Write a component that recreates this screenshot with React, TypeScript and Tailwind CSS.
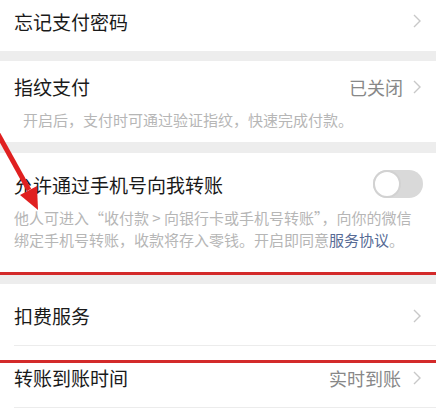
import React from "react";

const font = {
  fontFamily: '"Noto Sans CJK SC", "Noto Sans", sans-serif',
};

function Chevron() {
  return (
    <svg width="8" height="14" viewBox="0 0 8 14" className="shrink-0">
      <path d="M1 1 L7 7 L1 13" fill="none" stroke="#c8c8c8" strokeWidth="1.4" />
    </svg>
  );
}

function Toggle() {
  return (
    <div className="relative w-[50px] h-[28px] rounded-full bg-[#d9d9d9]">
      <div className="absolute left-0 top-0 w-[28px] h-[28px] rounded-full bg-white border-2 border-[#d2d2d2]" />
    </div>
  );
}

function Gap() {
  return <div className="h-[11px] bg-[#ededed]" />;
}

export default function App() {
  return (
    <div className="relative w-[436px] h-[418px] overflow-hidden bg-white" style={font}>
      {/* 忘记支付密码 */}
      <div className="flex items-start justify-between h-[51px] pl-[14px] pr-[15px] pt-[9px]">
        <span className="text-[19px] leading-[26px] text-[#1a1a1a]">忘记支付密码</span>
        <div className="pt-[5px]">
          <Chevron />
        </div>
      </div>
      <div className="h-[10px] bg-[#ededed]" />

      {/* 指纹支付 */}
      <div className="h-[81px] pt-[13px]">
        <div className="flex items-center justify-between pl-[14px] pr-[15px]">
          <span className="text-[19px] leading-[26px] text-[#1a1a1a]">指纹支付</span>
          <div className="flex items-center gap-[10px]">
            <span className="text-[18px] leading-[26px] text-[#888888]">已关闭</span>
            <Chevron />
          </div>
        </div>
        <p className="mt-[9px] pl-[23px] text-[15px] leading-[22px] text-[#b6b6b6]">
          开启后，支付时可通过验证指纹，快速完成付款。
        </p>
      </div>
      <Gap />

      {/* 允许通过手机号向我转账 */}
      <div className="h-[120px] pt-[19px] pl-[14px] pr-[13px]">
        <div className="flex items-center justify-between">
          <span className="text-[19px] leading-[26px] text-[#1a1a1a]">允许通过手机号向我转账</span>
          <div className="-mt-[3px]">
            <Toggle />
          </div>
        </div>
        <p className="mt-[9px] text-[15px] leading-[22px] text-[#b6b6b6] whitespace-nowrap">
          他人可进入“收付款 &gt; 向银行卡或手机号转账”，向你的微信
          <br />
          绑定手机号转账，收款将存入零钱。开启即同意
          <span className="text-[#576b95]">服务协议</span>。
        </p>
      </div>
      <Gap />

      {/* 扣费服务 */}
      <div className="pl-[14px]">
        <div className="flex items-center justify-between h-[62px] pt-[3px] pr-[15px] border-b border-[#ececec]">
          <span className="text-[19px] leading-[26px] text-[#1a1a1a]">扣费服务</span>
          <Chevron />
        </div>
        <div className="flex items-center justify-between h-[62px] pt-[3px] pr-[15px] border-b border-[#ececec]">
          <span className="text-[19px] leading-[26px] text-[#1a1a1a]">转账到账时间</span>
          <div className="flex items-center gap-[12px]">
            <span className="text-[18px] leading-[26px] text-[#888888]">实时到账</span>
            <Chevron />
          </div>
        </div>
      </div>

      {/* 标注：红线和箭头 */}
      <div className="absolute left-0 top-[272px] w-full h-[3px] bg-[#d32a2a]" />
      <div className="absolute left-0 top-[360px] w-full h-[3px] bg-[#d32a2a]" />
      <svg className="absolute left-0 top-0" width="60" height="220" viewBox="0 0 60 220">
        <line x1="-12" y1="116" x2="29" y2="190" stroke="#e02020" strokeWidth="5" />
        <polygon points="38,210 20,195 37,186" fill="#e02020" />
      </svg>
    </div>
  );
}
